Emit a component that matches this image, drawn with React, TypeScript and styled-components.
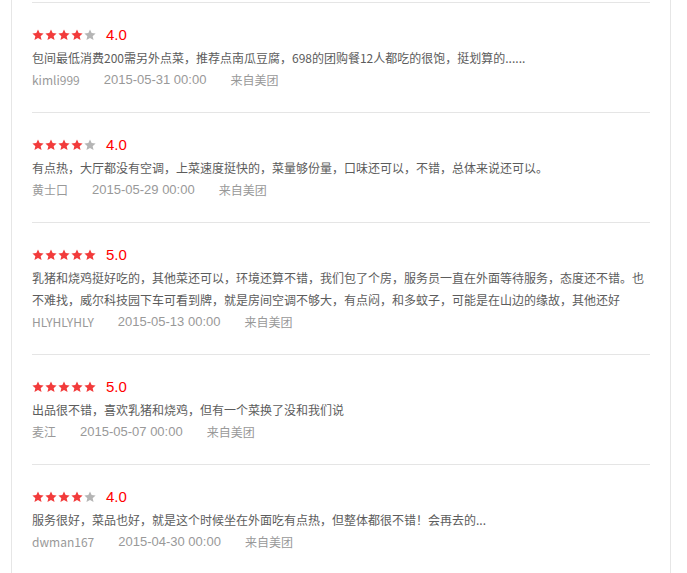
import React from 'react'
import styled, { createGlobalStyle } from 'styled-components'

const GlobalStyle = createGlobalStyle`
  html, body {
    margin: 0;
    padding: 0;
    background: #fff;
  }
  body {
    font-family: "Noto Sans CJK SC", "Liberation Sans", sans-serif;
  }
`

const Panel = styled.div`
  margin-left: 11px;
  width: 618px;
  padding: 0 20px;
  border-left: 1px solid #e6e6e6;
  border-right: 1px solid #e6e6e6;
  min-height: 573px;
`

const List = styled.ul`
  list-style: none;
  margin: 0;
  padding: 2px 0 0;
`

const Item = styled.li`
  border-top: 1px solid #e5e5e5;
  padding: 22px 0 21px;
`

const RatingRow = styled.div`
  display: flex;
  align-items: center;
  height: 20px;
  margin-bottom: 2px;
`

const Stars = styled.span`
  display: inline-flex;
  gap: 1px;
`

const Score = styled.span`
  margin-left: 10px;
  color: #f00;
  font-family: "Liberation Sans", Arial, sans-serif;
  font-size: 15px;
  line-height: 20px;
`

const Content = styled.p`
  margin: 0;
  color: #5c5c5c;
  font-size: 12px;
  line-height: 22px;
`

const Meta = styled.div`
  display: flex;
  align-items: center;
  gap: 24px;
  height: 22px;
  color: #999;
  font-size: 12px;
  line-height: 22px;
`

const Date = styled.span`
  font-family: "Liberation Sans", Arial, sans-serif;
  font-size: 13px;
`

const Star: React.FC<{ on: boolean }> = ({ on }) => (
  <svg width="12" height="12" viewBox="0 0 24 24">
    <path
      d="M12 1l3.3 7.2 7.9.8-5.9 5.3 1.8 7.7L12 18l-7.1 4 1.8-7.7-5.9-5.3 7.9-.8z"
      fill={on ? '#f23b3b' : '#b5b5b5'}
    />
  </svg>
)

interface Review {
  score: number
  text: string
  user: string
  date: string
}

const reviews: Review[] = [
  {
    score: 4,
    text: '包间最低消费200需另外点菜，推荐点南瓜豆腐，698的团购餐12人都吃的很饱，挺划算的......',
    user: 'kimli999',
    date: '2015-05-31 00:00',
  },
  {
    score: 4,
    text: '有点热，大厅都没有空调，上菜速度挺快的，菜量够份量，口味还可以，不错，总体来说还可以。',
    user: '黄士口',
    date: '2015-05-29 00:00',
  },
  {
    score: 5,
    text: '乳猪和烧鸡挺好吃的，其他菜还可以，环境还算不错，我们包了个房，服务员一直在外面等待服务，态度还不错。也不难找，威尔科技园下车可看到牌，就是房间空调不够大，有点闷，和多蚊子，可能是在山边的缘故，其他还好',
    user: 'HLYHLYHLY',
    date: '2015-05-13 00:00',
  },
  {
    score: 5,
    text: '出品很不错，喜欢乳猪和烧鸡，但有一个菜换了没和我们说',
    user: '麦江',
    date: '2015-05-07 00:00',
  },
  {
    score: 4,
    text: '服务很好，菜品也好，就是这个时候坐在外面吃有点热，但整体都很不错！会再去的...',
    user: 'dwman167',
    date: '2015-04-30 00:00',
  },
]

export default function App() {
  return (
    <>
      <GlobalStyle />
      <Panel>
        <List>
          {reviews.map((r) => (
            <Item key={r.user}>
              <RatingRow>
                <Stars>
                  {[0, 1, 2, 3, 4].map((i) => (
                    <Star key={i} on={i < r.score} />
                  ))}
                </Stars>
                <Score>{r.score.toFixed(1)}</Score>
              </RatingRow>
              <Content>{r.text}</Content>
              <Meta>
                <span>{r.user}</span>
                <Date>{r.date}</Date>
                <span>来自美团</span>
              </Meta>
            </Item>
          ))}
        </List>
      </Panel>
    </>
  )
}
